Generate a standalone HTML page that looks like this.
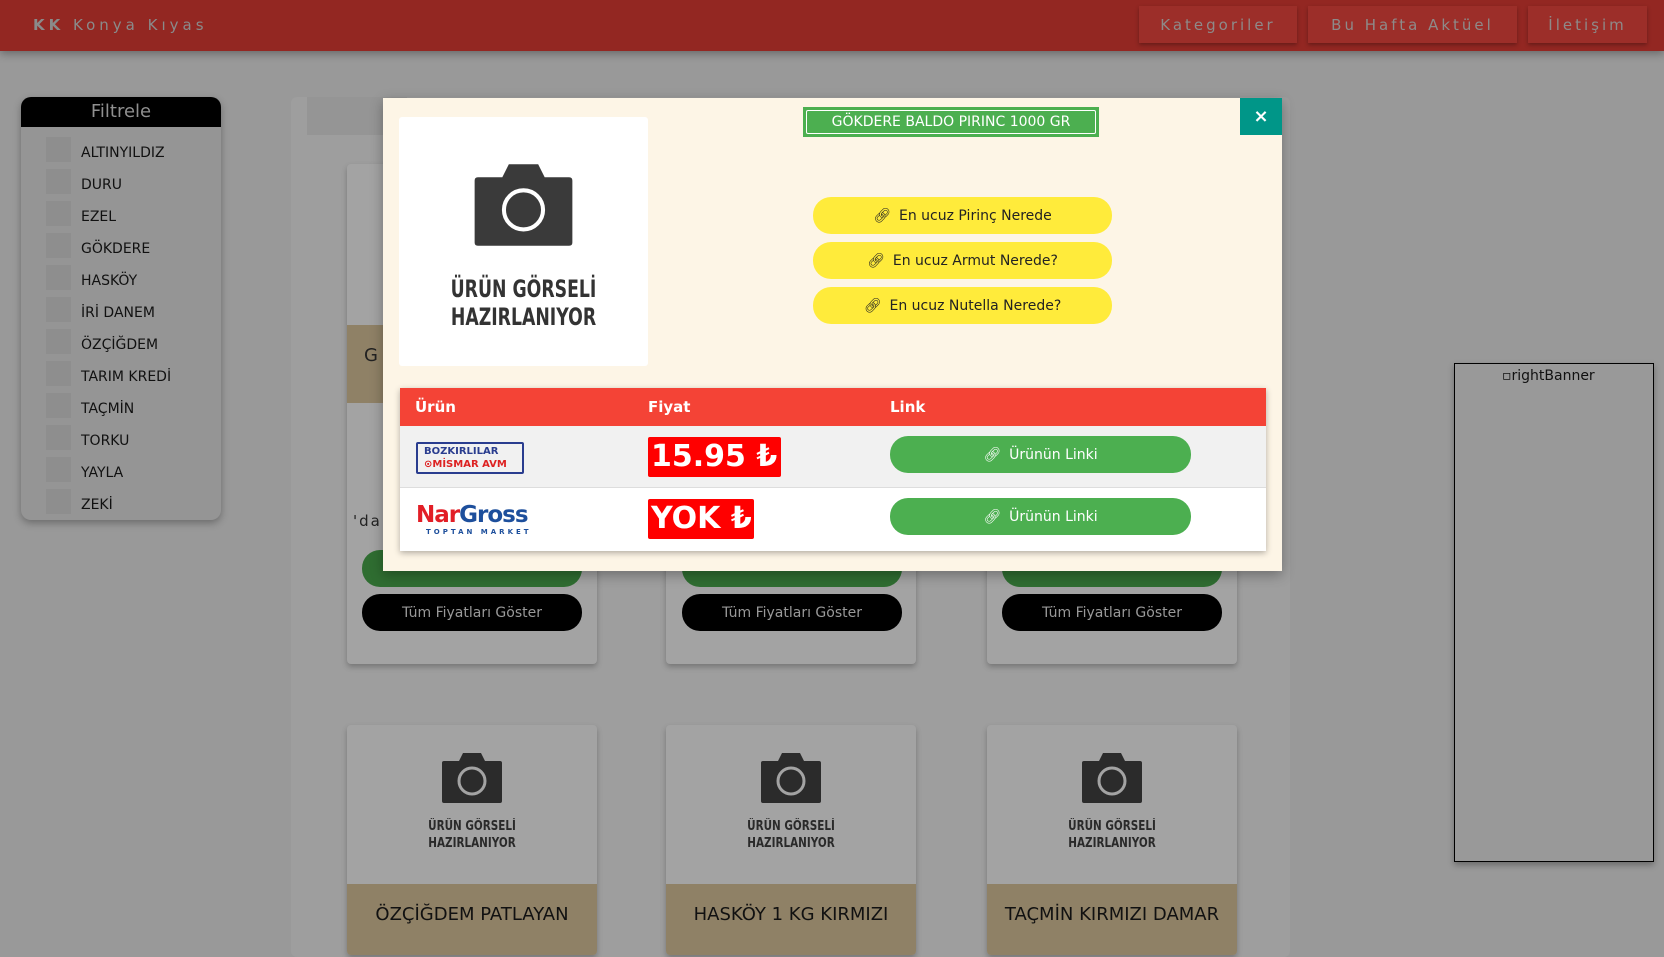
<!DOCTYPE html>
<html><head><meta charset="utf-8">
<style>
*{box-sizing:border-box;margin:0;padding:0}
body{width:1664px;height:933px;overflow:hidden;background:#999;font-family:"DejaVu Sans","Liberation Sans",sans-serif;position:relative}
.abs{position:absolute}
.nav{left:0;top:0;width:1664px;height:51px;background:#932722;box-shadow:0 3px 8px rgba(0,0,0,.3)}
.brand{left:33px;top:16px;color:#8a8a8a;font-size:15px;letter-spacing:4px}
.nb{top:6px;height:37px;background:#9c2e29;color:#8e8a89;font-size:15px;letter-spacing:3px;display:flex;align-items:center;justify-content:center;box-shadow:0 2px 4px rgba(0,0,0,.3)}
.side{left:21px;top:97px;width:200px;height:423px;background:#959595;border-radius:10px;overflow:hidden;box-shadow:0 3px 8px rgba(0,0,0,.3)}
.side .h{height:30px;background:#000;color:#8f8f8f;font-size:18px;text-align:center;line-height:30px}
.it{position:absolute;left:0;height:32px;width:200px;font-size:14px;color:#111}
.it i{position:absolute;left:25px;top:0;width:25px;height:25px;background:#8e8e8e}
.it span{position:absolute;left:60px;top:8px}
.main{left:291px;top:97px;width:999px;height:860px;background:#9e9e9e;border-radius:6px}
.card{width:250px;background:#a3a3a3;border-radius:4px;box-shadow:0 3px 6px rgba(0,0,0,.25)}
.blk{height:37px;border-radius:18px;background:#000;color:#999;font-size:14px;display:flex;align-items:center;justify-content:center}
.grn{height:37px;border-radius:18px;background:#2f6d31}
.tan{background:#8f8166;color:#111;font-size:18px;text-align:center}
.cam{position:absolute;left:50%;transform:translateX(-50%)}
.modal{left:383px;top:98px;width:899px;height:473px;background:#fdf5e6;box-shadow:0 4px 12px rgba(0,0,0,.3)}
.yb{position:absolute;left:430px;width:299px;height:37px;border-radius:18px;background:#ffeb3b;color:#222;font-size:14px;display:flex;align-items:center;justify-content:center;gap:8px}
.gb{position:absolute;left:490px;width:301px;height:37px;border-radius:18px;background:#4caf50;color:#fff;font-size:14px;display:flex;align-items:center;justify-content:center;gap:8px}
</style></head><body>
<div class="abs nav"></div>
<div class="abs brand"><b>KK</b> Konya Kıyas</div>
<div class="abs nb" style="left:1139px;width:158px">Kategoriler</div>
<div class="abs nb" style="left:1308px;width:209px">Bu Hafta Aktüel</div>
<div class="abs nb" style="left:1528px;width:119px">İletişim</div>

<div class="abs side"><div class="h">Filtrele</div>
<div class="it" style="top:40px"><i></i><span>ALTINYILDIZ</span></div>
<div class="it" style="top:72px"><i></i><span>DURU</span></div>
<div class="it" style="top:104px"><i></i><span>EZEL</span></div>
<div class="it" style="top:136px"><i></i><span>GÖKDERE</span></div>
<div class="it" style="top:168px"><i></i><span>HASKÖY</span></div>
<div class="it" style="top:200px"><i></i><span>İRİ DANEM</span></div>
<div class="it" style="top:232px"><i></i><span>ÖZÇİĞDEM</span></div>
<div class="it" style="top:264px"><i></i><span>TARIM KREDİ</span></div>
<div class="it" style="top:296px"><i></i><span>TAÇMİN</span></div>
<div class="it" style="top:328px"><i></i><span>TORKU</span></div>
<div class="it" style="top:360px"><i></i><span>YAYLA</span></div>
<div class="it" style="top:392px"><i></i><span>ZEKİ</span></div>
</div>

<div class="abs main"></div>
<div class="abs" style="left:307px;top:97px;width:100px;height:38px;background:#959595"></div>

<div class="abs card" style="left:347px;top:164px;height:500px"></div>
<div class="abs" style="left:347px;top:325px;width:36px;height:78px;background:#8f8166"></div>
<div class="abs" style="left:364px;top:345px;font-size:18px;color:#222">G</div>
<div class="abs" style="left:353px;top:512px;font-size:15px;color:#222;letter-spacing:2px">'da</div>
<div class="abs grn" style="left:362px;top:550px;width:220px"></div>
<div class="abs blk" style="left:362px;top:594px;width:220px">Tüm Fiyatları Göster</div>
<div class="abs card" style="left:666px;top:164px;height:500px"></div>
<div class="abs grn" style="left:682px;top:550px;width:220px"></div>
<div class="abs blk" style="left:682px;top:594px;width:220px">Tüm Fiyatları Göster</div>
<div class="abs card" style="left:987px;top:164px;height:500px"></div>
<div class="abs grn" style="left:1002px;top:550px;width:220px"></div>
<div class="abs blk" style="left:1002px;top:594px;width:220px">Tüm Fiyatları Göster</div>

<div class="abs card" style="left:347px;top:725px;height:230px;overflow:hidden">
 <svg class="cam" style="top:28px" width="62" height="50" viewBox="0 0 62 50"><path d="M18 8 L22 0 H40 L44 8 H59 Q61 8 61 10 V48 Q61 50 59 50 H3 Q1 50 1 48 V10 Q1 8 3 8Z" fill="#2b2b2b"/><circle cx="31" cy="28" r="13" fill="none" stroke="#a3a3a3" stroke-width="3"/></svg>
 <div style="position:absolute;top:93px;width:100%;text-align:center;font-size:13px;font-weight:bold;color:#2a2a2a;line-height:17px;transform:scaleX(.8)">ÜRÜN GÖRSELİ<br>HAZIRLANIYOR</div>
 <div class="tan" style="position:absolute;top:159px;width:100%;height:80px;padding-top:20px">ÖZÇİĞDEM PATLAYAN</div></div>
<div class="abs card" style="left:666px;top:725px;height:230px;overflow:hidden">
 <svg class="cam" style="top:28px" width="62" height="50" viewBox="0 0 62 50"><path d="M18 8 L22 0 H40 L44 8 H59 Q61 8 61 10 V48 Q61 50 59 50 H3 Q1 50 1 48 V10 Q1 8 3 8Z" fill="#2b2b2b"/><circle cx="31" cy="28" r="13" fill="none" stroke="#a3a3a3" stroke-width="3"/></svg>
 <div style="position:absolute;top:93px;width:100%;text-align:center;font-size:13px;font-weight:bold;color:#2a2a2a;line-height:17px;transform:scaleX(.8)">ÜRÜN GÖRSELİ<br>HAZIRLANIYOR</div>
 <div class="tan" style="position:absolute;top:159px;width:100%;height:80px;padding-top:20px">HASKÖY 1 KG KIRMIZI</div></div>
<div class="abs card" style="left:987px;top:725px;height:230px;overflow:hidden">
 <svg class="cam" style="top:28px" width="62" height="50" viewBox="0 0 62 50"><path d="M18 8 L22 0 H40 L44 8 H59 Q61 8 61 10 V48 Q61 50 59 50 H3 Q1 50 1 48 V10 Q1 8 3 8Z" fill="#2b2b2b"/><circle cx="31" cy="28" r="13" fill="none" stroke="#a3a3a3" stroke-width="3"/></svg>
 <div style="position:absolute;top:93px;width:100%;text-align:center;font-size:13px;font-weight:bold;color:#2a2a2a;line-height:17px;transform:scaleX(.8)">ÜRÜN GÖRSELİ<br>HAZIRLANIYOR</div>
 <div class="tan" style="position:absolute;top:159px;width:100%;height:80px;padding-top:20px">TAÇMİN KIRMIZI DAMAR</div></div>

<div class="abs" style="left:1454px;top:363px;width:200px;height:499px;border:1px solid #000;box-shadow:0 3px 6px rgba(0,0,0,.3)"></div>
<div class="abs" style="left:1502px;top:368px;font-size:14px;color:#111">▫rightBanner</div>

<div class="abs modal">
 <div class="abs" style="right:0;top:0;width:42px;height:37px;background:#009688;color:#fff;font-weight:bold;font-size:18px;text-align:center;line-height:37px">×</div>
 <div class="abs" style="left:16px;top:19px;width:249px;height:249px;background:#fff;border-radius:3px">
  <svg style="position:absolute;left:74px;top:47px" width="101" height="82" viewBox="0 0 62 50"><path d="M18 8 L22 0 H40 L44 8 H59 Q61 8 61 10 V48 Q61 50 59 50 H3 Q1 50 1 48 V10 Q1 8 3 8Z" fill="#3a3a3a"/><circle cx="31" cy="28" r="12" fill="none" stroke="#fff" stroke-width="2.5"/></svg>
  <div style="position:absolute;top:158px;width:100%;text-align:center;font-size:24px;font-weight:bold;color:#333;line-height:28px;transform:scaleX(.72)">ÜRÜN GÖRSELİ<br>HAZIRLANIYOR</div>
 </div>
 <div class="abs" style="left:420px;top:9px;width:296px;height:30px;background:#4caf50;padding:3px">
  <div style="border:1px solid #fff;height:24px;color:#fff;font-size:14px;text-align:center;line-height:22px;border-radius:2px">GÖKDERE BALDO PIRINC 1000 GR</div></div>
 <div class="yb" style="top:99px">🔗︎<span>En ucuz Pirinç Nerede</span></div>
 <div class="yb" style="top:144px">🔗︎<span>En ucuz Armut Nerede?</span></div>
 <div class="yb" style="top:189px">🔗︎<span>En ucuz Nutella Nerede?</span></div>
 <div class="abs" style="left:17px;top:290px;width:866px;height:163px;background:#fff;box-shadow:0 2px 6px rgba(0,0,0,.3)">
  <div style="position:absolute;top:0;width:100%;height:38px;background:#f44336;color:#fff;font-weight:bold;font-size:15px">
   <span style="position:absolute;left:15px;top:10px">Ürün</span><span style="position:absolute;left:248px;top:10px">Fiyat</span><span style="position:absolute;left:490px;top:10px">Link</span></div>
  <div style="position:absolute;top:38px;width:100%;height:62px;background:#f1f1f1;border-bottom:1px solid #ddd"></div>
  <div style="position:absolute;left:16px;top:54px;width:108px;height:32px;border:2px solid #2a3d8f;border-radius:2px;font-size:10px;font-weight:bold;line-height:13px;padding:1px 6px;color:#2a3d8f">BOZKIRLILAR<br><span style="color:#d22">⊙MİSMAR AVM</span></div>
  <div style="position:absolute;left:248px;top:49px;width:133px;height:40px;background:#f00;color:#fff;font-weight:bold;font-size:30px;line-height:40px;padding-left:3px;border-radius:2px">15.95 ₺</div>
  <div class="gb" style="top:48px">🔗︎<span>Ürünün Linki</span></div>
  <div style="position:absolute;left:16px;top:114px;font-size:23px;font-weight:bold;letter-spacing:-1px"><span style="color:#e21e26">Nar</span><span style="color:#1d4f9c">Gross</span></div>
  <div style="position:absolute;left:26px;top:140px;font-size:7px;font-weight:bold;color:#1d4f9c;letter-spacing:3px">TOPTAN MARKET</div>
  <div style="position:absolute;left:248px;top:111px;width:106px;height:40px;background:#f00;color:#fff;font-weight:bold;font-size:30px;line-height:40px;padding-left:3px;border-radius:2px">YOK ₺</div>
  <div class="gb" style="top:110px">🔗︎<span>Ürünün Linki</span></div>
 </div>
</div>
</body></html>
